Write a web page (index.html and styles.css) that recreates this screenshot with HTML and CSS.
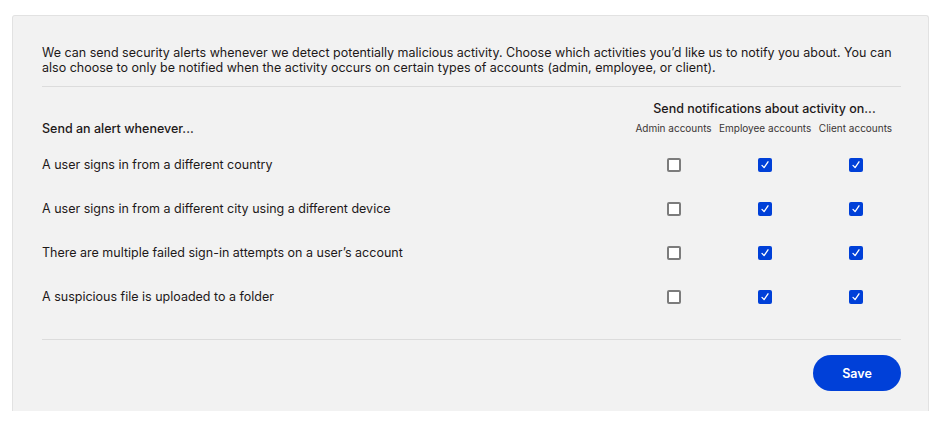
FILE: index.html
```html
<!DOCTYPE html>
<html lang="en">
<head>
<meta charset="utf-8">
<title>Security alerts</title>
<link rel="stylesheet" href="styles.css">
</head>
<body>
<div class="panel">
  <p class="intro">We can send security alerts whenever we detect potentially malicious activity. Choose which activities you’d like us to notify you about. You can also choose to only be notified when the activity occurs on certain types of accounts (admin, employee, or client).</p>
  <hr class="divider">
  <div class="table">
    <div class="head-left">Send an alert whenever...</div>
    <div class="head-right">
      <div class="group-title">Send notifications about activity on...</div>
      <div class="col-labels">
        <span>Admin accounts</span>
        <span>Employee accounts</span>
        <span>Client accounts</span>
      </div>
    </div>

    <div class="row">
      <div class="label">A user signs in from a different country</div>
      <div class="cell"><span class="cb"></span></div>
      <div class="cell"><span class="cb on"><svg viewBox="0 0 14 14"><path d="M4 7.4 L6.1 9.6 L10 3.8"/></svg></span></div>
      <div class="cell"><span class="cb on"><svg viewBox="0 0 14 14"><path d="M4 7.4 L6.1 9.6 L10 3.8"/></svg></span></div>
    </div>
    <div class="row">
      <div class="label">A user signs in from a different city using a different device</div>
      <div class="cell"><span class="cb"></span></div>
      <div class="cell"><span class="cb on"><svg viewBox="0 0 14 14"><path d="M4 7.4 L6.1 9.6 L10 3.8"/></svg></span></div>
      <div class="cell"><span class="cb on"><svg viewBox="0 0 14 14"><path d="M4 7.4 L6.1 9.6 L10 3.8"/></svg></span></div>
    </div>
    <div class="row">
      <div class="label">There are multiple failed sign-in attempts on a user’s account</div>
      <div class="cell"><span class="cb"></span></div>
      <div class="cell"><span class="cb on"><svg viewBox="0 0 14 14"><path d="M4 7.4 L6.1 9.6 L10 3.8"/></svg></span></div>
      <div class="cell"><span class="cb on"><svg viewBox="0 0 14 14"><path d="M4 7.4 L6.1 9.6 L10 3.8"/></svg></span></div>
    </div>
    <div class="row">
      <div class="label">A suspicious file is uploaded to a folder</div>
      <div class="cell"><span class="cb"></span></div>
      <div class="cell"><span class="cb on"><svg viewBox="0 0 14 14"><path d="M4 7.4 L6.1 9.6 L10 3.8"/></svg></span></div>
      <div class="cell"><span class="cb on"><svg viewBox="0 0 14 14"><path d="M4 7.4 L6.1 9.6 L10 3.8"/></svg></span></div>
    </div>
  </div>
  <hr class="divider bottom">
  <div class="actions">
    <button class="save">Save</button>
  </div>
</div>
</body>
</html>
```

FILE: styles.css
```css
html, body {
  margin: 0;
  padding: 0;
  background: #ffffff;
}
body {
  padding: 15px 12px 0 12px;
  font-family: Inter, "Liberation Sans", sans-serif;
  color: #1e1919;
}
.panel {
  background: #f2f2f2;
  border: 1px solid #e2e2e2;
  border-bottom: none;
  border-radius: 3px 3px 0 0;
  padding: 29px 27px 20px 29px;
  height: 396px;
  box-sizing: border-box;
}
.intro {
  margin: 0;
  font-size: 12.5px;
  line-height: 15px;
}
.divider {
  border: none;
  border-top: 1px solid #dcdcdc;
  margin: 11px 0 0 0;
}
.table {
  display: grid;
  grid-template-columns: 1fr 91px 91px 91px;
}
.head-left {
  grid-column: 1;
  align-self: end;
  font-size: 12.5px;
  font-weight: 500;
  line-height: 16px;
  padding-bottom: 6px;
}
.head-right {
  grid-column: 2 / 5;
  padding-top: 14px;
  padding-bottom: 8px;
}
.group-title {
  text-align: center;
  font-size: 12.5px;
  font-weight: 500;
  line-height: 16px;
}
.col-labels {
  display: grid;
  grid-template-columns: 91px 91px 91px;
  margin-top: 4px;
  font-size: 10px;
  line-height: 14px;
  color: #3a3535;
  text-align: center;
  white-space: nowrap;
}
.row {
  display: contents;
}
.label, .cell {
  height: 44px;
  display: flex;
  align-items: center;
}
.label {
  font-size: 12.5px;
  line-height: 16px;
}
.cell {
  justify-content: center;
}
.cb {
  box-sizing: border-box;
  width: 14px;
  height: 14px;
  border: 2px solid #7c7c7c;
  border-radius: 2px;
  background: #ffffff;
  display: block;
}
.cb.on {
  border: none;
  background: #0040d8;
}
.cb svg {
  display: block;
  width: 14px;
  height: 14px;
}
.cb svg path {
  fill: none;
  stroke: #ffffff;
  stroke-width: 1.3;
  stroke-linecap: round;
  stroke-linejoin: round;
}
.divider.bottom {
  margin-top: 20px;
}
.actions {
  display: flex;
  justify-content: flex-end;
  margin-top: 15px;
}
.save {
  width: 88px;
  height: 36px;
  border: none;
  border-radius: 18px;
  background: #0040d8;
  color: #ffffff;
  font-family: Inter, "Liberation Sans", sans-serif;
  font-size: 12.5px;
  font-weight: 600;
  cursor: pointer;
}
```
